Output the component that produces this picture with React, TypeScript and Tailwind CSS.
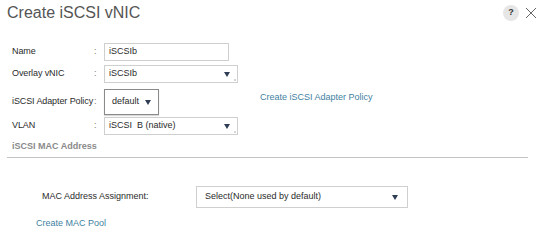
const font = { fontFamily: '"Liberation Sans", Arial, sans-serif' };

function Arrow() {
    return (
        <svg width="6" height="5" viewBox="0 0 6 5" className="shrink-0">
            <path d="M0 0 L6 0 L3 5 Z" fill="#2f3d55" />
        </svg>
    );
}

function Select({ value, width }: { value: string; width: string }) {
    return (
        <div
            className={`relative flex h-[18px] items-center justify-between border border-[#cfcfcf] bg-white pr-[7px] pl-[4px] ${width}`}
        >
            <span className="whitespace-pre">{value}</span>
            <Arrow />
            <span className="absolute right-[1px] bottom-[1px] h-[2px] w-[2px] bg-[#d5d5d5]" />
        </div>
    );
}

function Row({ label, children }: { label: string; children: React.ReactNode }) {
    return (
        <div className="flex items-center">
            <span className="w-[82px] shrink-0 tracking-[-0.1px] whitespace-nowrap">{label}</span>
            <span className="w-[10px] shrink-0 text-[#777]">:</span>
            {children}
        </div>
    );
}

export default function App() {
    return (
        <div
            className="h-[245px] w-[545px] overflow-hidden bg-white text-[9px] text-[#2b2b2b]"
            style={font}
        >
            <div className="flex h-[26px] items-center justify-between pr-[8px] pl-[7px]">
                <h1 className="text-[16px] leading-none text-[#555]">Create iSCSI vNIC</h1>
                <div className="flex items-center gap-[6px]">
                    <span className="flex h-[16px] w-[16px] items-center justify-center rounded-full bg-[#e6e6e6] text-[9px] font-bold text-[#333]">
                        ?
                    </span>
                    <svg width="12" height="12" viewBox="0 0 12 12">
                        <path d="M1 1 L11 11 M11 1 L1 11" stroke="#666" strokeWidth="1" />
                    </svg>
                </div>
            </div>

            <div className="mt-[17px] flex flex-col pl-[12px]">
                <Row label="Name">
                    <div className="flex h-[18px] w-[125px] items-center border border-[#cfcfcf] pl-[4px]">
                        iSCSIb
                    </div>
                </Row>

                <div className="mt-[4px]">
                    <Row label="Overlay vNIC">
                        <Select value="iSCSIb" width="w-[134px]" />
                    </Row>
                </div>

                <div className="mt-[6px] flex items-start">
                    <Row label="iSCSI Adapter Policy">
                        <div className="flex h-[26px] w-[55px] items-center gap-[6px] border border-[#8a8a8a] pl-[7px] shadow-[0_1px_1px_rgba(0,0,0,0.15)]">
                            <span>default</span>
                            <Arrow />
                        </div>
                    </Row>
                    <span className="mt-[2px] ml-[101px] text-[#3f7f9f]">Create iSCSI Adapter Policy</span>
                </div>

                <div className="mt-[2px]">
                    <Row label="VLAN">
                        <Select value="iSCSI  B (native)" width="w-[134px]" />
                    </Row>
                </div>

                <div className="mt-[6px] flex h-[12px] items-center font-bold text-[#8a8a8a]">
                    iSCSI MAC Address
                </div>
            </div>

            <div className="mt-[4px] mr-[17px] ml-[7px] h-px bg-[#c4c4c4]" />

            <div className="mt-[28px] flex items-center pl-[42px]">
                <span className="w-[154px] shrink-0">MAC Address Assignment:</span>
                <div className="flex h-[22px] w-[212px] items-center justify-between border border-[#cfcfcf] pr-[9px] pl-[8px]">
                    <span>Select(None used by default)</span>
                    <Arrow />
                </div>
            </div>

            <div className="mt-[9px] pl-[36px] text-[#3f7f9f]">Create MAC Pool</div>
        </div>
    );
}
